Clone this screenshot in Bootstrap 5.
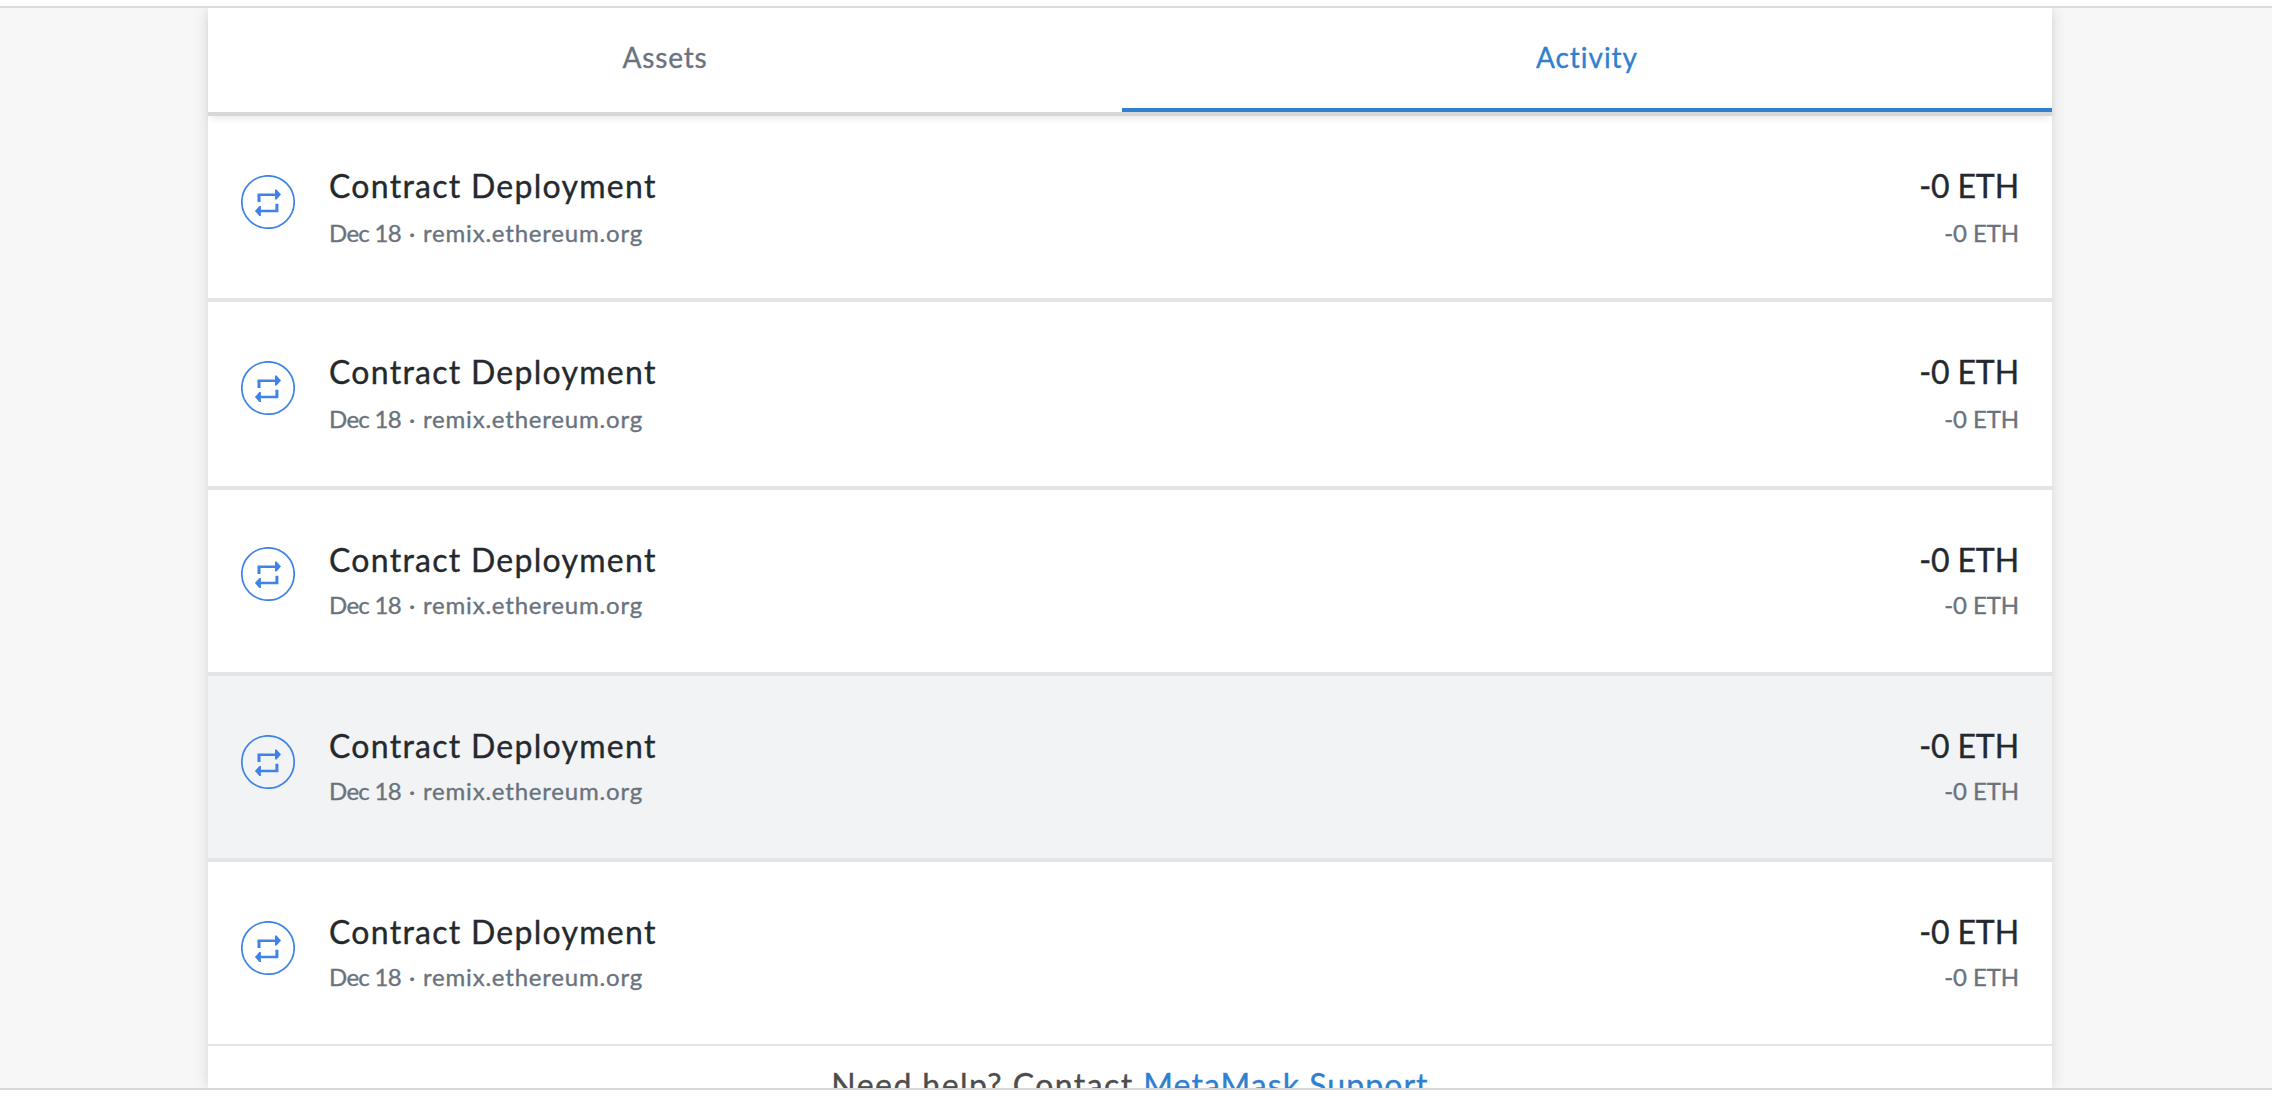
<!DOCTYPE html>
<html lang="en">
<head>
<meta charset="utf-8">
<meta name="viewport" content="width=device-width, initial-scale=1">
<title>Activity</title>
<link rel="stylesheet" href="https://cdn.jsdelivr.net/npm/bootstrap@5.3.0/dist/css/bootstrap.min.css">
<style>
body{font-family:Lato,"Open Sans",sans-serif;height:1096px;background:#fff;-webkit-text-stroke:.35px currentColor}
.viewport{height:1084px;margin-top:6px;border-top:2px solid #dcdcdc;border-bottom:2px solid #d8d8d8;background:#f7f7f7}
.panel{width:1844px;margin-left:208px;height:1080px;box-shadow:0 0 14px rgba(0,0,0,.14)}
.tabs{height:108px;border-bottom:4px solid #d8d8d8;box-shadow:0 5px 8px -3px rgba(0,0,0,.1);position:relative}
.tabs .nav-link{font-size:28px;line-height:40px;letter-spacing:.8px;color:#6a737d;padding:29px 0 0;width:914px;border-radius:0}
.tabs .nav-link.active{width:930px;color:#2f80d0;border-bottom:4px solid #2f80d0;letter-spacing:.95px}
.tx{height:186px;border-bottom:4px solid #e4e4e4;padding:0 33px}
.tx:nth-child(2){height:188px}
.tx:last-child{height:184px;border-bottom-width:2px}
.tx.hovered{background:#f2f3f5}
.tx svg{width:54px;height:54px;margin:59px 34px 0 0;flex:none}
.tx:nth-child(3) svg{margin-top:57px}
.tx-text{padding-top:50px}
.ttl{font-size:32px;line-height:40px;color:#24292e;letter-spacing:1.27px}
.sub{font-size:24px;line-height:32px;color:#6a737d;margin-top:11px;letter-spacing:.8px}
.tx:nth-child(n+3) .sub{margin-top:9px}
.date{letter-spacing:-.7px}
.dot{width:22px;letter-spacing:0}
.amount .ttl{letter-spacing:-.1px}
.amount .sub{letter-spacing:-.1px}
.help{font-size:32px;line-height:44px;color:#4d4d4d;padding-top:17px;letter-spacing:1.43px}
.help a{color:#2f80d0;letter-spacing:1.05px}
</style>
<script src="https://cdn.jsdelivr.net/npm/bootstrap@5.3.0/dist/js/bootstrap.bundle.min.js"></script>
</head>
<body class="overflow-hidden">
<svg class="d-none"><symbol id="swap" viewBox="0 0 54 54"><circle cx="27" cy="27" r="26.2" fill="none" stroke="#3f83e8" stroke-width="1.7"/><path fill="#3f83e8" d="M16.500 27V18.400H34V14.600H35.500L40 19.600L35.500 24.600H34V21H19.500V27ZM37.400 28.700V37.300H19.900V40.900H18.400L13.900 35.900L18.400 30.900H19.900V34.700H34.400V28.700Z"/></symbol></svg>
<main class="viewport overflow-hidden">
<div class="panel bg-white">
<nav class="tabs nav flex-nowrap text-center"><a class="nav-link" href="#">Assets</a><a class="nav-link active" href="#">Activity</a></nav>
<section>
<div class="tx d-flex"><svg><use href="#swap"/></svg><div class="tx-text flex-grow-1"><div class="ttl">Contract Deployment</div><div class="sub d-flex"><span class="date">Dec 18</span><span class="dot text-center">·</span><span>remix.ethereum.org</span></div></div><div class="tx-text amount text-end"><div class="ttl">-0 ETH</div><div class="sub">-0 ETH</div></div></div>
<div class="tx d-flex"><svg><use href="#swap"/></svg><div class="tx-text flex-grow-1"><div class="ttl">Contract Deployment</div><div class="sub d-flex"><span class="date">Dec 18</span><span class="dot text-center">·</span><span>remix.ethereum.org</span></div></div><div class="tx-text amount text-end"><div class="ttl">-0 ETH</div><div class="sub">-0 ETH</div></div></div>
<div class="tx d-flex"><svg><use href="#swap"/></svg><div class="tx-text flex-grow-1"><div class="ttl">Contract Deployment</div><div class="sub d-flex"><span class="date">Dec 18</span><span class="dot text-center">·</span><span>remix.ethereum.org</span></div></div><div class="tx-text amount text-end"><div class="ttl">-0 ETH</div><div class="sub">-0 ETH</div></div></div>
<div class="tx hovered d-flex"><svg><use href="#swap"/></svg><div class="tx-text flex-grow-1"><div class="ttl">Contract Deployment</div><div class="sub d-flex"><span class="date">Dec 18</span><span class="dot text-center">·</span><span>remix.ethereum.org</span></div></div><div class="tx-text amount text-end"><div class="ttl">-0 ETH</div><div class="sub">-0 ETH</div></div></div>
<div class="tx d-flex"><svg><use href="#swap"/></svg><div class="tx-text flex-grow-1"><div class="ttl">Contract Deployment</div><div class="sub d-flex"><span class="date">Dec 18</span><span class="dot text-center">·</span><span>remix.ethereum.org</span></div></div><div class="tx-text amount text-end"><div class="ttl">-0 ETH</div><div class="sub">-0 ETH</div></div></div>
</section>
<footer class="help text-center">Need help? Contact <a class="text-decoration-none" href="#">MetaMask Support</a></footer>
</div>
</main>
</body></html>
